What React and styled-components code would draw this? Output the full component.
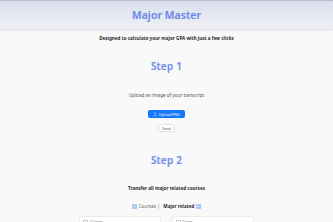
import React from 'react';
import styled, { createGlobalStyle } from 'styled-components';

const Global = createGlobalStyle`
  html, body {
    margin: 0;
    padding: 0;
    background: #f9f9fa;
    font-family: "Noto Sans", "Open Sans", sans-serif;
    overflow: hidden;
  }
`;

const Page = styled.div`
  width: 333px;
  display: flex;
  flex-direction: column;
  align-items: center;

  & > * {
    flex-shrink: 0;
  }
`;

const Header = styled.header`
  align-self: stretch;
  height: 28px;
  border-top: 1px solid #b9bdc9;
  border-bottom: 1px solid #e4e4e6;
  background: linear-gradient(180deg, #dbe0ee 0%, #eef0f5 100%);
  box-shadow: 0 1px 3px rgba(0, 0, 0, 0.05);
  display: flex;
  align-items: center;
  justify-content: center;
`;

const Title = styled.h1`
  margin: 0;
  font-size: 10.4px;
  font-weight: 600;
  letter-spacing: 0.1px;
  color: #6f8ae8;
  text-shadow: 0 0 1px rgba(108, 135, 230, 0.35);
`;

const Lead = styled.p`
  margin: ${p => p.$top}px 0 0;
  font-size: 4.6px;
  line-height: 6px;
  font-weight: ${p => (p.$bold ? 700 : 400)};
  color: ${p => (p.$bold ? '#2b2b2b' : '#555')};
`;

const Step = styled.h2`
  margin: ${p => p.$top}px 0 0;
  font-size: 10px;
  line-height: 14px;
  font-weight: 600;
  letter-spacing: 0.2px;
  color: #7390e9;
  text-shadow: 0 0 1px rgba(111, 140, 232, 0.3);
`;

const Button = styled.button`
  margin-top: ${p => p.$top}px;
  height: 8px;
  padding: 0 ${p => (p.$primary ? 4 : 3)}px;
  border-radius: 1.5px;
  border: 0.5px solid ${p => (p.$primary ? '#1677ff' : '#e2e2e2')};
  background: ${p => (p.$primary ? '#1677ff' : '#fff')};
  color: ${p => (p.$primary ? '#fff' : '#555')};
  font-family: inherit;
  font-size: 3.6px;
  display: flex;
  align-items: center;
  gap: 1.5px;
  box-shadow: 0 0.5px 0 rgba(0, 0, 0, 0.03);
`;

const SwitchRow = styled.div`
  margin-top: 12px;
  display: flex;
  align-items: center;
  gap: 1.5px;
  font-size: 4.6px;
  line-height: 6px;
  color: #666;
`;

const Strong = styled.span`
  font-weight: 700;
  color: #2b2b2b;
  margin-left: 2px;
`;

const Arrow = styled.span`
  width: 5px;
  height: 5px;
  border-radius: 0.6px;
  background: #a9c6f5;
  display: inline-flex;
  align-items: center;
  justify-content: center;
  color: #fff;
  font-size: 3px;
  line-height: 1;
`;

const Panels = styled.div`
  margin-top: 7px;
  display: flex;
  gap: 11px;
`;

const Panel = styled.div`
  width: 82px;
  height: 30px;
  background: #fff;
  border: 0.5px solid #ececec;
  border-radius: 2px;
  padding: 2px 3px;
  box-sizing: border-box;
  font-size: 3.4px;
  color: #777;
  display: flex;
  align-items: flex-start;
  gap: 1.5px;
`;

const Check = styled.span`
  width: 3px;
  height: 3px;
  border: 0.4px solid #ccc;
  border-radius: 0.5px;
  margin-top: 0.5px;
`;

const UploadIcon = () => (
  <svg width="4" height="4" viewBox="0 0 16 16" fill="none" stroke="#fff" strokeWidth="1.6">
    <path d="M8 2v9M4.5 5.5 8 2l3.5 3.5M2 14h12" />
  </svg>
);

export default function App() {
  return (
    <Page>
      <Global />
      <Header>
        <Title>Major Master</Title>
      </Header>
      <Lead $bold $top={5}>Designed to calculate your major GPA with just a few clicks</Lead>
      <Step $top={18}>Step 1</Step>
      <Lead $top={19}>Upload an image of your transcript</Lead>
      <Button $primary $top={12}>
        <UploadIcon />
        Upload PNG
      </Button>
      <Button $top={6}>Send</Button>
      <Step $top={21}>Step 2</Step>
      <Lead $bold $top={18}>Transfer all major related courses</Lead>
      <SwitchRow>
        <Arrow>▸</Arrow>
        Courses |
        <Strong>Major related</Strong>
        <Arrow>▸</Arrow>
      </SwitchRow>
      <Panels>
        <Panel>
          <Check />
          14 items
        </Panel>
        <Panel>
          <Check />
          0 item
        </Panel>
      </Panels>
    </Page>
  );
}
